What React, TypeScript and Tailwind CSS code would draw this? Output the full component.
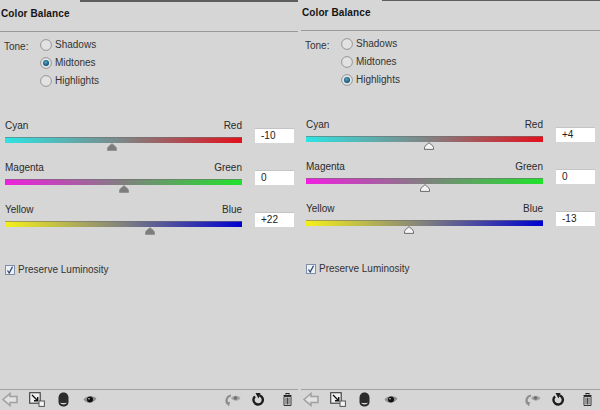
const FONT = "font-['Liberation_Sans',Arial,sans-serif]";

type Slider = {
  left: string;
  right: string;
  value: number;
  gradient: string;
};

type PanelProps = {
  tone: string;
  sliders: Slider[];
  lightThumb?: boolean;
  className?: string;
  footerClass?: string;
};

const TONES = ["Shadows", "Midtones", "Highlights"];

function Radio({ checked }: { checked: boolean }) {
  return (
    <svg width="12" height="12" viewBox="0 0 12 12" className="shrink-0">
      <defs>
        <radialGradient id="radioOn" cx="45%" cy="40%" r="60%">
          <stop offset="0%" stopColor="#5aa6c8" />
          <stop offset="100%" stopColor="#0b4c70" />
        </radialGradient>
      </defs>
      <circle cx="6" cy="6" r="5.4" fill="#e2e2e2" stroke="#8f8f8f" strokeWidth="0.9" />
      {checked && <circle cx="6" cy="6" r="3" fill="url(#radioOn)" />}
    </svg>
  );
}

function Thumb({ light }: { light?: boolean }) {
  return (
    <svg width="11" height="8" viewBox="0 0 11 8">
      <path
        d="M5.500 .6 C6.500 2 10 3.600 10 5.600 V7.400 H1 V5.600 C1 3.600 4.500 2 5.500 .6 Z"
        fill={light ? "#f4f4f4" : "#7d7d7d"}
        stroke={light ? "#4a4a4a" : "#8a8a8a"}
        strokeWidth="0.8"
      />
    </svg>
  );
}

function SliderRow({ slider, light }: { slider: Slider; light?: boolean }) {
  const pct = ((slider.value + 100) / 200) * 100;
  const shown = slider.value > 0 ? `+${slider.value}` : `${slider.value}`;
  return (
    <div className="flex h-[42px] items-start gap-[13px]">
      <div className="w-[237px]">
        <div className="flex h-[20px] items-center justify-between pb-[2px] text-[10px] leading-none text-[#2a2a2a]">
          <span>{slider.left}</span>
          <span>{slider.right}</span>
        </div>
        <div className="relative">
          <div
            className="h-[6px] border-t border-[#6f6f6f]/60"
            style={{ background: slider.gradient }}
          />
          <div
            className="absolute top-[6px] flex -translate-x-1/2"
            style={{ left: `${pct}%` }}
          >
            <Thumb light={light} />
          </div>
        </div>
      </div>
      <div className="mt-[11px] flex h-[15px] w-[39px] items-center border-t border-[#c4c4c4] bg-white pl-[6px] text-[10px] leading-none text-[#222]">
        {shown}
      </div>
    </div>
  );
}

function Footer({ className }: { className?: string }) {
  return (
    <div className={`flex h-[21px] items-center border-t border-[#a2a2a2] pb-[1px] pl-[2px] ${className ?? ""}`}>
      <svg width="16" height="15" viewBox="0 0 16 15" className="mr-[11px]">
        <path d="M1 7.500 L8 1.500 V4.500 H15 V10.500 H8 V13.500 Z" fill="#e2e2e2" stroke="#a0a0a0" strokeWidth="1.500" />
      </svg>
      <svg width="16" height="15" viewBox="0 0 16 15" className="mr-[13px]">
        <rect x="0.700" y="0.700" width="10.500" height="10.500" fill="#efefef" stroke="#3a3a3a" strokeWidth="1.100" />
        <path d="M3 3 L8.500 8.500 M8.700 5 V8.700 H5" fill="none" stroke="#111" strokeWidth="1.400" />
        <rect x="10" y="9" width="5.400" height="5.400" fill="#f5f5f5" stroke="#555" />
      </svg>
      <svg width="11" height="15" viewBox="0 0 11 15" className="mr-[14px]">
        <path d="M5.500 .5 C9 .5 10.500 3 10.500 6 V10 C10.500 13 8 14.500 5.500 14.500 C3 14.500 .5 13 .5 10 V6 C.5 3 2 .5 5.500 .5 Z" fill="#2c2c2c" />
        <path d="M2 10.500 C3 13 8 13 9 10.500 C8 11.200 3 11.200 2 10.500 Z" fill="#d9d9d9" />
      </svg>
      <svg width="14" height="10" viewBox="0 0 14 10">
        <path d="M.5 4.500 C3 1 10 0 13.500 3.500 C11 8 4 9.500 .5 4.500 Z" fill="#8f8f8f" />
        <circle cx="7" cy="4.600" r="3" fill="#111" />
        <circle cx="6" cy="3.800" r="0.800" fill="#ddd" />
      </svg>
      <div className="flex-1" />
      <svg width="17" height="14" viewBox="0 0 17 14" className="mr-[11px]">
        <path d="M7 2.500 A5 5 0 0 0 4 11" fill="none" stroke="#8e8e8e" strokeWidth="2.200" />
        <path d="M1.500 9 L6 9 L5 13.500 Z" fill="#8e8e8e" />
        <path d="M7 5 C9.500 2 14 2 16.500 5 C14 8.500 9.500 8.500 7 5 Z" fill="#a5a5a5" />
        <circle cx="11.500" cy="5" r="1.800" fill="#6f6f6f" />
      </svg>
      <svg width="13" height="13" viewBox="0 0 13 13" className="mr-[18px]">
        <path d="M7.500 2.300 A4.700 4.700 0 1 1 3 3.300" fill="none" stroke="#1d1d1d" strokeWidth="2.400" />
        <path d="M3.500 0 L8.500 0 L6.500 5.500 Z" fill="#1d1d1d" />
      </svg>
      <svg width="9" height="13" viewBox="0 0 9 13">
        <path d="M3 1.500 V.5 H6 V1.500 M.5 2.500 H8.500" fill="none" stroke="#222" strokeWidth="1.200" />
        <path d="M1 3.500 H8 V12.500 H1 Z" fill="#e8e8e8" stroke="#333" />
        <path d="M3 4.500 V11.500 M4.500 4.500 V11.500 M6 4.500 V11.500" stroke="#333" strokeWidth="0.900" />
      </svg>
    </div>
  );
}

function Panel({ tone, sliders, lightThumb, className, footerClass }: PanelProps) {
  return (
    <div className={`flex flex-col ${className ?? ""}`}>
      <div className="flex h-[2px] justify-end">
        <div className="h-[2px] w-[218px] bg-[#5e5e5e]" />
      </div>
      <div className="flex h-[30px] items-center border-b border-[#9a9a9a] pb-[5px] pl-[1px] text-[10px] font-bold leading-none tracking-[0.1px] text-[#141414]">
        Color Balance
      </div>
      <div className="flex pl-[4px] pt-[7px] text-[10px] leading-none text-[#333]">
        <span className="mt-[3px] w-[36px]">Tone:</span>
        <div className="flex flex-col gap-[6px]">
          {TONES.map((t) => (
            <div key={t} className="flex h-[12px] items-center gap-[3px]">
              <Radio checked={t === tone} />
              <span>{t}</span>
            </div>
          ))}
        </div>
      </div>
      <div className="pl-[5px] pt-[30px]">
        {sliders.map((s) => (
          <SliderRow key={s.left} slider={s} light={lightThumb} />
        ))}
      </div>
      <div className="flex items-center gap-[3px] pl-[5px] pt-[22px] text-[10px] leading-none text-[#333]">
        <span className="flex h-[10px] w-[10px] items-center justify-center border border-[#7d8ea8] bg-[#eef0f4]">
          <svg width="8" height="8" viewBox="0 0 8 8">
            <path d="M1.500 4.500 L3.200 7 L6.500 .8" fill="none" stroke="#2b4a7c" strokeWidth="1.300" />
          </svg>
        </span>
        Preserve Luminosity
      </div>
      <div className="flex-1" />
      <Footer className={footerClass} />
    </div>
  );
}

const cr = "linear-gradient(90deg,#2fe3e3,#7f8585 50%,#e3101c)";
const mg = "linear-gradient(90deg,#f01fe0,#808080 50%,#1fe32a)";
const yb = "linear-gradient(90deg,#f5f01a,#808080 50%,#0000d0)";

export default function App() {
  return (
    <div className={`flex h-[410px] w-[600px] overflow-hidden bg-[#d6d6d6] ${FONT}`}>
      <Panel
        className="h-[410px] w-[300px] pr-[2px]"
        footerClass="pr-[6px]"
        tone="Midtones"
        sliders={[
          { left: "Cyan", right: "Red", value: -10, gradient: cr },
          { left: "Magenta", right: "Green", value: 0, gradient: mg },
          { left: "Yellow", right: "Blue", value: 22, gradient: yb },
        ]}
      />
      <Panel
        className="mt-[-1px] h-[411px] w-[300px] pl-[1px]"
        footerClass="pr-[8px]"
        tone="Highlights"
        lightThumb
        sliders={[
          { left: "Cyan", right: "Red", value: 4, gradient: cr },
          { left: "Magenta", right: "Green", value: 0, gradient: mg },
          { left: "Yellow", right: "Blue", value: -13, gradient: yb },
        ]}
      />
    </div>
  );
}
